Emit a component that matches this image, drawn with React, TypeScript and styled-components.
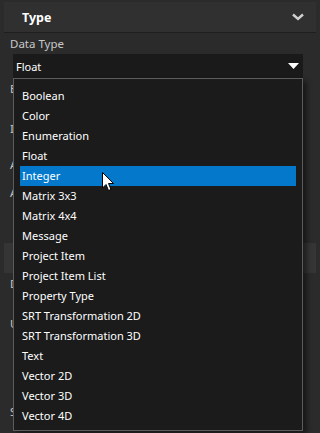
import styled, { createGlobalStyle } from 'styled-components';

const GlobalStyle = createGlobalStyle`
  html, body {
    margin: 0;
    padding: 0;
    background: #2b2b2b;
  }
  body {
    font-family: 'Noto Sans', 'Open Sans', sans-serif;
    font-size: 11px;
    color: #e6e6e6;
    overflow: hidden;
  }
`;

const types = [
  'Boolean',
  'Color',
  'Enumeration',
  'Float',
  'Integer',
  'Matrix 3x3',
  'Matrix 4x4',
  'Message',
  'Project Item',
  'Project Item List',
  'Property Type',
  'SRT Transformation 2D',
  'SRT Transformation 3D',
  'Text',
  'Vector 2D',
  'Vector 3D',
  'Vector 4D',
];

const Page = styled.div`
  width: 320px;
  height: 433px;
  padding: 2px 4px 0;
  box-sizing: border-box;
  position: relative;
`;

const Header = styled.div`
  height: 30px;
  display: flex;
  align-items: center;
  justify-content: space-between;
  padding: 0 12px 0 18px;
  background: #303030;
  border-bottom: 1px solid #1f1f1f;
`;

const Title = styled.span`
  font-weight: 700;
  font-size: 12.5px;
  color: #ffffff;
`;

const Body = styled.div`
  padding: 1px 0 0 6px;
  display: flex;
  flex-direction: column;
`;

const Label = styled.div<{ $top?: number }>`
  color: #c8c8c8;
  font-size: 11.5px;
  height: 20px;
  line-height: 20px;
  margin-top: ${(p) => p.$top ?? 0}px;
`;

const Field = styled.div`
  position: relative;
  margin-left: 3px;
  width: 290px;
`;

const Select = styled.div`
  height: 24px;
  background: #1a1a1a;
  display: flex;
  align-items: center;
  justify-content: space-between;
  padding: 0 4px 0 3px;
  color: #ffffff;
`;

const Strip = styled.div`
  height: 30px;
  margin: 0 0 0 -6px;
  background: #353535;
`;

const Popup = styled.ul`
  position: absolute;
  top: 100%;
  left: 0;
  width: 290px;
  height: 353px;
  box-sizing: border-box;
  margin: 0;
  padding: 7px 6px 0;
  list-style: none;
  background: #1b1b1b;
  border: 1px solid #5c5c5c;
  box-shadow: 4px 3px 5px rgba(0, 0, 0, 0.45);
  z-index: 2;
`;

const Item = styled.li<{ $active?: boolean }>`
  height: 20px;
  line-height: 20px;
  padding-left: 2px;
  color: #ffffff;
  background: ${(p) => (p.$active ? '#0479cc' : 'transparent')};
`;

const Cursor = styled.svg`
  position: absolute;
  left: 102px;
  top: 172px;
  z-index: 3;
`;

export default function App() {
  return (
    <Page>
      <GlobalStyle />
      <Header>
        <Title>Type</Title>
        <svg width="12" height="8" viewBox="0 0 12 8">
          <path d="M1 1.5 L6 6 L11 1.5" stroke="#d0d0d0" strokeWidth="2.4" fill="none" />
        </svg>
      </Header>
      <Body>
        <Label>Data Type</Label>
        <Field>
          <Select>
            <span>Float</span>
            <svg width="11" height="6" viewBox="0 0 11 6">
              <path d="M0 0 H11 L5.5 6 Z" fill="#ffffff" />
            </svg>
          </Select>
          <Popup>
            {types.map((t) => (
              <Item key={t} $active={t === 'Integer'}>
                {t}
              </Item>
            ))}
          </Popup>
        </Field>
        <Label $top={1}>B</Label>
        <Label $top={20}>I</Label>
        <Label $top={16}>A</Label>
        <Label $top={8}>A</Label>
        <Label $top={40}>
          <Strip />
        </Label>
        <Label $top={11}>D</Label>
        <Label $top={20}>U</Label>
        <Label $top={68}>S</Label>
      </Body>
      <Cursor width="13" height="20" viewBox="0 0 13 20">
        <path
          d="M0.5 0.5 V16 L4 12.5 L6.5 18.5 L9 17.5 L6.5 11.5 H11.5 Z"
          fill="#ffffff"
          stroke="#000000"
          strokeWidth="1"
        />
      </Cursor>
    </Page>
  );
}
